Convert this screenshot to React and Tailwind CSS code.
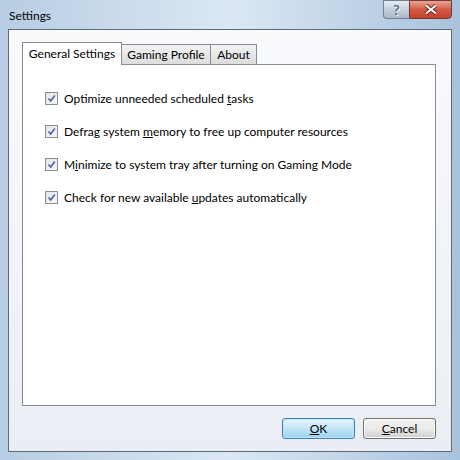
import React from 'react';

const font = { fontFamily: '"Segoe UI", Lato, "Noto Sans", sans-serif' };

function Check({ children }) {
  return (
    <div className="flex items-center h-[33px]">
      <span className="w-[13px] h-[13px] border border-[#8f8f8f] bg-gradient-to-br from-[#dfe4ea] to-[#f7f8fa] flex items-center justify-center">
        <svg width="9" height="9" viewBox="0 0 9 9">
          <path d="M1.5 4.5 L3.7 7 L7.8 1.5" fill="none" stroke="#4a62a8" strokeWidth="1.6" />
        </svg>
      </span>
      <span className="ml-[6px] text-[12px] text-black">{children}</span>
    </div>
  );
}

export default function App() {
  return (
    <div
      className="w-[460px] h-[460px] bg-gradient-to-r from-[#b7cde3] via-[#dbe8f4] to-[#a9c2dc] flex flex-col"
      style={font}
    >
      {/* title bar */}
      <div className="h-[29px] flex items-start justify-between pl-[9px]">
        <span className="text-[12px] text-black mt-[7px]">Settings</span>
        <div className="flex mr-[8px]">
          <div className="w-[26px] h-[19px] border border-[#6f8196] border-r-0 rounded-bl-[4px] bg-gradient-to-b from-[#e4ebf2] via-[#c5d0dc] to-[#aab8c8] flex items-center justify-center text-[14px] leading-none font-bold text-[#5d6977] [text-shadow:1px_1px_0_#f4f7fa]">
            ?
          </div>
          <div className="w-[43px] h-[19px] border border-[#6f3a34] rounded-br-[4px] bg-gradient-to-b from-[#e8a593] via-[#d25a44] to-[#c8412b] flex items-center justify-center">
            <svg width="14" height="11" viewBox="0 0 14 11">
              <path d="M2 1.5 L12 9.5 M12 1.5 L2 9.5" stroke="#5a1b12" strokeWidth="3.6" />
              <path d="M2 1.5 L12 9.5 M12 1.5 L2 9.5" stroke="#ffffff" strokeWidth="2.2" />
            </svg>
          </div>
        </div>
      </div>

      {/* client */}
      <div className="mx-[8px] h-[423px] border border-[#5b6b7c] bg-gradient-to-b from-[#f9fafc] to-[#eaeef4] flex flex-col pl-[13px] pr-[15px]">
        {/* tabs */}
        <div className="flex items-end h-[34px] pt-[11px]">
          <div className="w-[100px] h-[23px] border border-[#898c95] border-b-0 bg-white text-[12px] flex items-center justify-center relative top-[1px] z-10">
            General Settings
          </div>
          <div className="w-[89px] h-[20px] border border-[#898c95] border-l-0 border-b-0 bg-gradient-to-b from-[#f3f3f3] to-[#dcdcdc] text-[12px] flex items-center justify-center">
            Gaming Profile
          </div>
          <div className="w-[46px] h-[20px] border border-[#898c95] border-l-0 border-b-0 bg-gradient-to-b from-[#f3f3f3] to-[#dcdcdc] text-[12px] flex items-center justify-center">
            About
          </div>
        </div>
        <div className="h-[342px] border border-[#898c95] bg-white pl-[22px] pt-[17px]">
          <Check>Optimize unneeded scheduled <u>t</u>asks</Check>
          <Check>Defrag system <u>m</u>emory to free up computer resources</Check>
          <Check>M<u>i</u>nimize to system tray after turning on Gaming Mode</Check>
          <Check>Check for new available <u>u</u>pdates automatically</Check>
        </div>
        {/* buttons */}
        <div className="flex justify-end gap-[8px] mt-[12px]">
          <button className="w-[73px] h-[21px] rounded-[3px] border border-[#3c7fb1] bg-gradient-to-b from-[#e5f4fc] via-[#c4e5f6] to-[#98d1ef] text-[12px] text-black shadow-[inset_0_0_0_1px_#bde6fd]">
            <u>O</u>K
          </button>
          <button className="w-[73px] h-[21px] rounded-[3px] border border-[#707070] bg-gradient-to-b from-[#f2f2f2] via-[#ebebeb] to-[#cfcfcf] text-[12px] text-black shadow-[inset_0_0_0_1px_#fcfcfc]">
            <u>C</u>ancel
          </button>
        </div>
      </div>
    </div>
  );
}
